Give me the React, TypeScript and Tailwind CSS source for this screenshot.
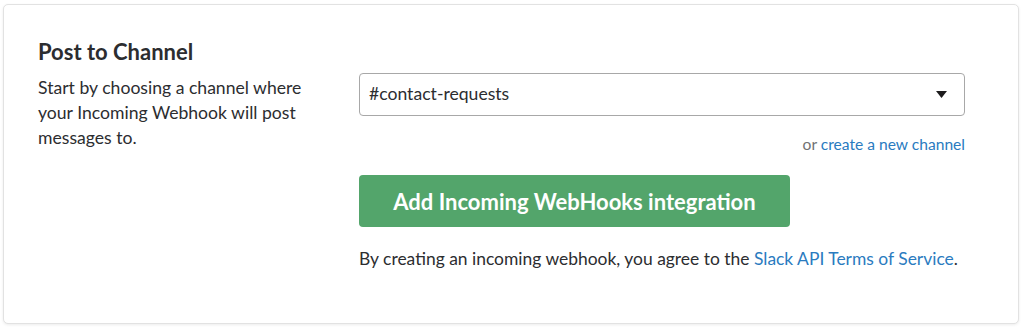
export default function App() {
  return (
    <div
      className="h-[330px] w-[1024px] bg-white pl-[3px] pt-[4px]"
      style={{ fontFamily: "Lato, 'Noto Sans', sans-serif" }}
    >
      <div className="h-[320px] w-[1016px] rounded-[5px] border border-[#e2e2e2] bg-white shadow-[0_1px_3px_rgba(0,0,0,0.08)]">
        <div className="flex pl-[34px] pt-[33px]">
          {/* Left: heading + description */}
          <div className="w-[321px] shrink-0">
            <h2 className="text-[22px] font-bold leading-[28px] text-[#2c2d30]">
              Post to Channel
            </h2>
            <p className="mt-[9px] w-[290px] text-[17.6px] leading-[25px] text-[#2c2d30]">
              Start by choosing a channel where your Incoming Webhook will post
              messages to.
            </p>
          </div>

          {/* Right: select, button, terms */}
          <div className="w-[606px] pt-[35px]">
            <div className="flex h-[43px] items-center justify-between rounded-[4px] border border-[#a8a8a8] bg-white pl-[9px] pr-[17px]">
              <span className="text-[17.6px] text-[#2c2d30]">#contact-requests</span>
              <svg width="11" height="7" viewBox="0 0 11 7">
                <polygon points="0,0 11,0 5.5,7" fill="#1d1c1d" />
              </svg>
            </div>

            <div className="mt-[18px] text-right text-[15.6px] leading-[20px] text-[#717274]">
              or <span className="text-[#2a7bbf]">create a new channel</span>
            </div>

            <button className="mt-[21px] flex h-[52px] w-[431px] items-center justify-center rounded-[4px] bg-[#53a56b] text-[22px] font-bold text-white">
              Add Incoming WebHooks integration
            </button>

            <p className="mt-[19px] text-[17.45px] leading-[25px] text-[#2c2d30]">
              By creating an incoming webhook, you agree to the{" "}
              <span className="text-[#2a7bbf]">Slack API Terms of Service</span>.
            </p>
          </div>
        </div>
      </div>
    </div>
  );
}
